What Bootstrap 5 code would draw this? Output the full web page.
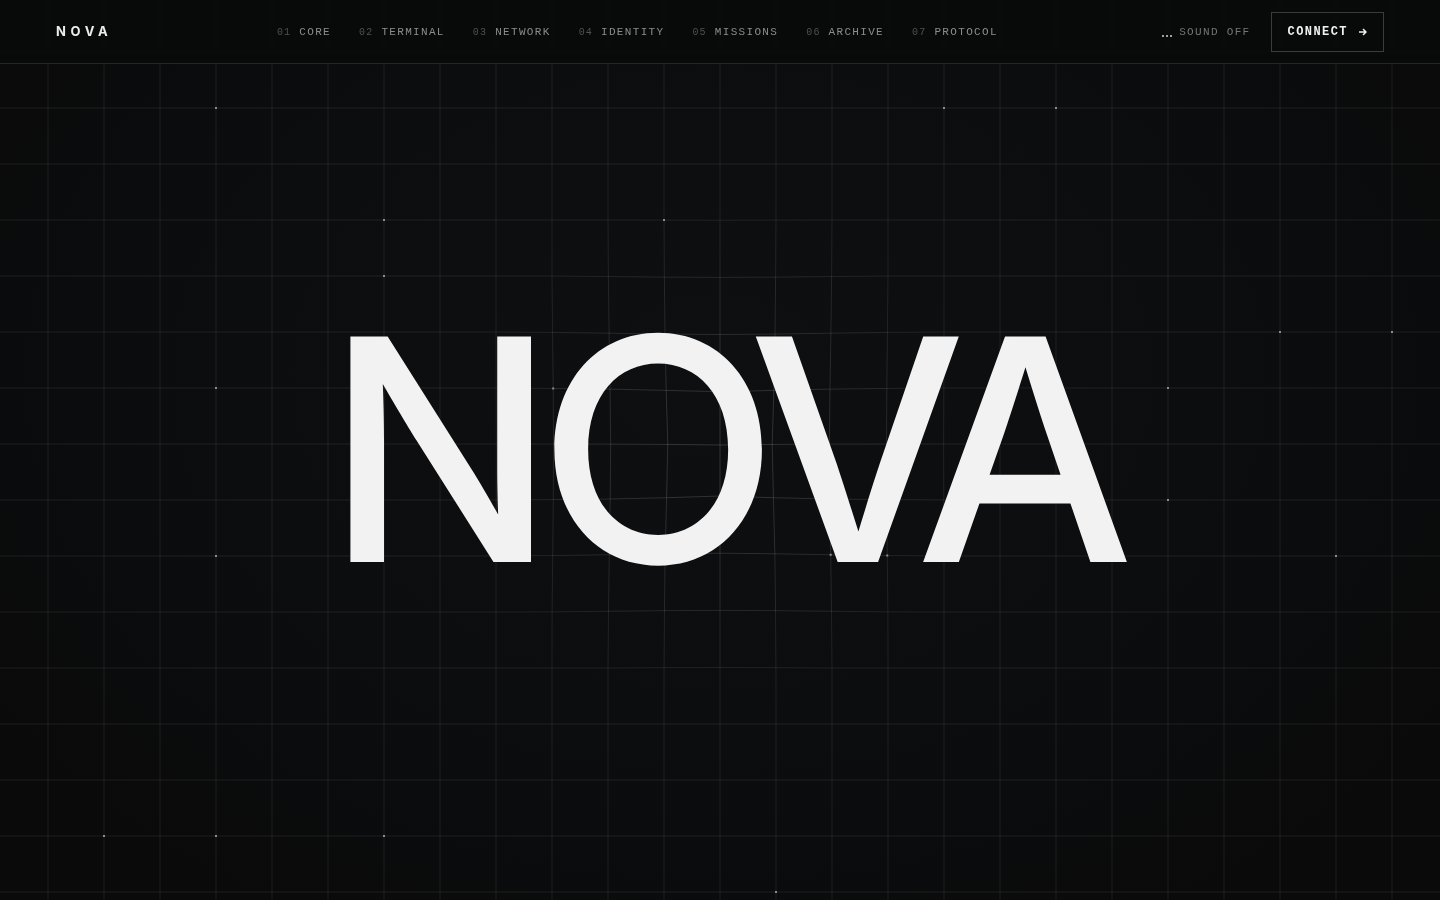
<!DOCTYPE html>
<html lang="en">
<head>
<meta charset="utf-8">
<meta name="viewport" content="width=device-width, initial-scale=1">
<title>NOVA</title>
<link href="https://cdn.jsdelivr.net/npm/bootstrap@5.3.0/dist/css/bootstrap.min.css" rel="stylesheet">
<style>
  body {
    background: radial-gradient(ellipse at 50% 42%, #0d0f11 0%, #0b0d0f 50%, #0a0a0a 85%);
    background-color: #0a0a0a;
    color: #f2f2f2;
    font-family: "Inter Display", Inter, "Liberation Sans", sans-serif;
  }
  .mono { font-family: "Liberation Mono", monospace; letter-spacing: .12em; text-transform: uppercase; }
  .site-header { height: 64px; padding: 0 56px; background: rgba(9, 10, 10, .94); border-bottom: 1px solid #242525; }
  .brand { font-family: Inter, sans-serif; font-size: 13px; font-weight: 700; letter-spacing: .36em; line-height: 18px; padding-bottom: 2px; color: #ececec; }
  .site-links { gap: 28px; padding-top: 2px; }
  .site-links a { gap: 8px; font-size: 11px; line-height: 16px; color: #8c8c8c; }
  .site-links .num { font-size: 10px; letter-spacing: .12em; color: #505050; }
  .header-tools { gap: 20px; }
  .sound { gap: 7px; font-size: 11px; line-height: 16px; color: #747474; }
  .bars { gap: 2px; height: 10px; }
  .bars i { width: 2px; height: 2px; background: #a0a0a0; }
  .connect { height: 40px; gap: 11px; padding: 0 16px; font-size: 12px; font-weight: 700; line-height: 16px; color: #f0f0f0; border: 1px solid #3a3b3b; }
  .field { z-index: -1; }
  .field path { fill: none; stroke: #fff; stroke-width: 1; }
  .field rect { fill: #8c8c8c; }
  .wordmark { font-size: 310px; font-weight: 500; line-height: 300px; letter-spacing: -.03em; padding-left: 10px; color: #f2f2f2; }
</style>
</head>
<body>
<svg class="field position-fixed top-0 start-0 w-100 h-100" aria-hidden="true"></svg>
<header class="site-header fixed-top d-flex align-items-center justify-content-between">
  <a href="#" class="brand text-decoration-none">NOVA</a>
  <nav class="site-links d-flex">
    <a href="#core" class="mono d-flex align-items-baseline text-decoration-none"><span class="num">01</span>Core</a>
    <a href="#terminal" class="mono d-flex align-items-baseline text-decoration-none"><span class="num">02</span>Terminal</a>
    <a href="#network" class="mono d-flex align-items-baseline text-decoration-none"><span class="num">03</span>Network</a>
    <a href="#identity" class="mono d-flex align-items-baseline text-decoration-none"><span class="num">04</span>Identity</a>
    <a href="#missions" class="mono d-flex align-items-baseline text-decoration-none"><span class="num">05</span>Missions</a>
    <a href="#archive" class="mono d-flex align-items-baseline text-decoration-none"><span class="num">06</span>Archive</a>
    <a href="#protocol" class="mono d-flex align-items-baseline text-decoration-none"><span class="num">07</span>Protocol</a>
  </nav>
  <div class="header-tools d-flex align-items-center">
    <button type="button" class="sound mono d-flex align-items-center border-0 bg-transparent p-0"><span class="bars d-flex align-items-end"><i></i><i></i><i></i></span>Sound off</button>
    <button type="button" class="connect mono d-flex align-items-center bg-transparent">Connect
      <svg width="8" height="8" viewBox="0 0 8 8" fill="none" stroke="currentColor" stroke-width="1.5" aria-hidden="true"><path d="M0 4h7M4 1l3 3-3 3"/></svg>
    </button>
  </div>
</header>
<main class="min-vh-100 d-flex align-items-center justify-content-center">
  <h1 class="wordmark m-0">NOVA</h1>
</main>
<script src="https://cdn.jsdelivr.net/npm/bootstrap@5.3.0/dist/js/bootstrap.bundle.min.js"></script>
<script>
  // Background lattice: nodes every 56px, drawn in toward the middle of the window.
  const STEP = 56, REACH = 240, PULL = 5;
  // Lit nodes, as [column, row] offsets from the middle node.
  const LIT = [[-9,-6],[4,-6],[6,-6],[-6,-4],[-1,-4],[-6,-3],[10,-2],[12,-2],[-9,-1],[-3,-1],[8,-1],[8,1],
    [-9,2],[2,2],[3,2],[11,2],[-11,7],[-9,7],[-6,7],[1,8]];
  const svg = document.querySelector('.field');
  function draw() {
    const cx = innerWidth / 2, cy = innerHeight / 2, oy = cy - 6;
    const cols = Math.ceil(cx / STEP) + 1, rows = Math.ceil(cy / STEP) + 1;
    const node = (c, r) => {
      const x = cx + c * STEP, y = oy + r * STEP, d = Math.hypot(cx - x, cy - y);
      const k = d < REACH && d > 0 ? PULL * (1 - d / REACH) / Math.max(d, 30) : 0;
      return [x + (cx - x) * k, y + (cy - y) * k, Math.max(0, 1 - d / REACH)];
    };
    let out = '';
    const seg = (a, b) => {
      out += `<path d="M${a[0]} ${a[1]}L${b[0]} ${b[1]}" stroke-opacity="${0.08 + 0.09 * (a[2] + b[2]) / 2}"/>`;
    };
    for (let c = -cols; c <= cols; c++) for (let r = -rows; r <= rows; r++) {
      seg(node(c, r), node(c + 1, r));
      seg(node(c, r), node(c, r + 1));
    }
    for (const [c, r] of LIT) {
      const p = node(c, r);
      out += `<rect x="${p[0] - 1}" y="${p[1] - 1}" width="2" height="2"/>`;
    }
    svg.innerHTML = out;
  }
  addEventListener('resize', draw);
  draw();
</script>
</body>
</html>
